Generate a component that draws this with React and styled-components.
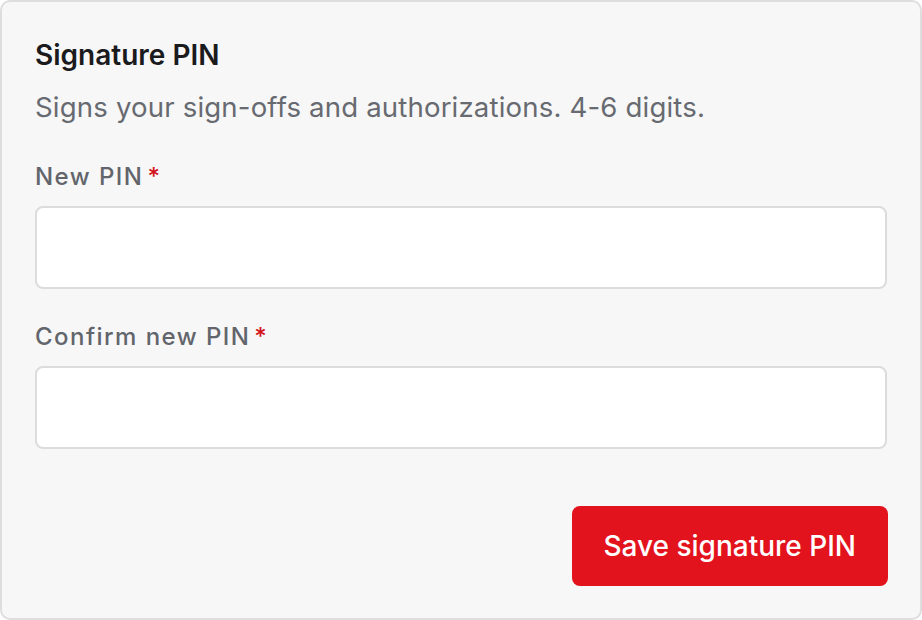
import styled, { createGlobalStyle } from 'styled-components'

const GlobalStyle = createGlobalStyle`
  html, body {
    margin: 0;
    padding: 0;
    background: #ffffff;
  }
  body {
    font-family: Inter, 'Noto Sans', sans-serif;
    -webkit-font-smoothing: antialiased;
  }
`

const fields = [
  { id: 'new-pin', label: 'New PIN' },
  { id: 'confirm-pin', label: 'Confirm new PIN' }
]

const App = () => {
  return (
    <>
      <GlobalStyle />
      <Card>
        <Title>Signature PIN</Title>
        <Description>
          Signs your sign-offs and authorizations. 4-6 digits.
        </Description>
        <Fields>
          {fields.map(({ id, label }) => (
            <Field key={id}>
              <Label htmlFor={id}>
                {label}
                <Required>*</Required>
              </Label>
              <Input id={id} type="password" inputMode="numeric" />
            </Field>
          ))}
        </Fields>
        <Actions>
          <SaveButton type="button">Save signature PIN</SaveButton>
        </Actions>
      </Card>
    </>
  )
}

const Card = styled.div`
  box-sizing: border-box;
  width: 922px;
  height: 620px;
  padding: 35px 33px 33px;
  background: #f7f7f7;
  border: 2px solid #dedede;
  border-radius: 10px;
  display: flex;
  flex-direction: column;
`

const Title = styled.h2`
  margin: 0;
  font-size: 28px;
  line-height: 36px;
  font-weight: 600;
  color: #1b1b1d;
`

const Description = styled.p`
  margin: 17px 0 0;
  font-size: 27.6px;
  line-height: 35px;
  font-weight: 400;
  color: #676a70;
  letter-spacing: 0.16px;
`

const Fields = styled.div`
  margin-top: 36px;
  display: flex;
  flex-direction: column;
  gap: 32px;
`

const Field = styled.div`
  display: flex;
  flex-direction: column;
  gap: 14px;
`

const Label = styled.label`
  font-size: 24px;
  line-height: 31px;
  font-weight: 500;
  color: #62656b;
  letter-spacing: 1.45px;
`

const Required = styled.span`
  color: #d4141c;
  margin-left: 4px;
`

const Input = styled.input`
  box-sizing: border-box;
  width: 100%;
  height: 83px;
  margin: 0;
  padding: 0 20px;
  background: #ffffff;
  border: 2px solid #dcdcdc;
  border-radius: 8px;
  font-family: inherit;
  font-size: 26px;
  outline: none;
`

const Actions = styled.div`
  margin-top: 57px;
  display: flex;
  justify-content: flex-end;
`

const SaveButton = styled.button`
  box-sizing: border-box;
  height: 80px;
  margin-right: -1px;
  padding: 0 32px 0 31px;
  border: none;
  border-radius: 8px;
  background: #e3131e;
  color: #ffffff;
  font-family: inherit;
  font-size: 28px;
  font-weight: 500;
  cursor: pointer;
`

export default App
